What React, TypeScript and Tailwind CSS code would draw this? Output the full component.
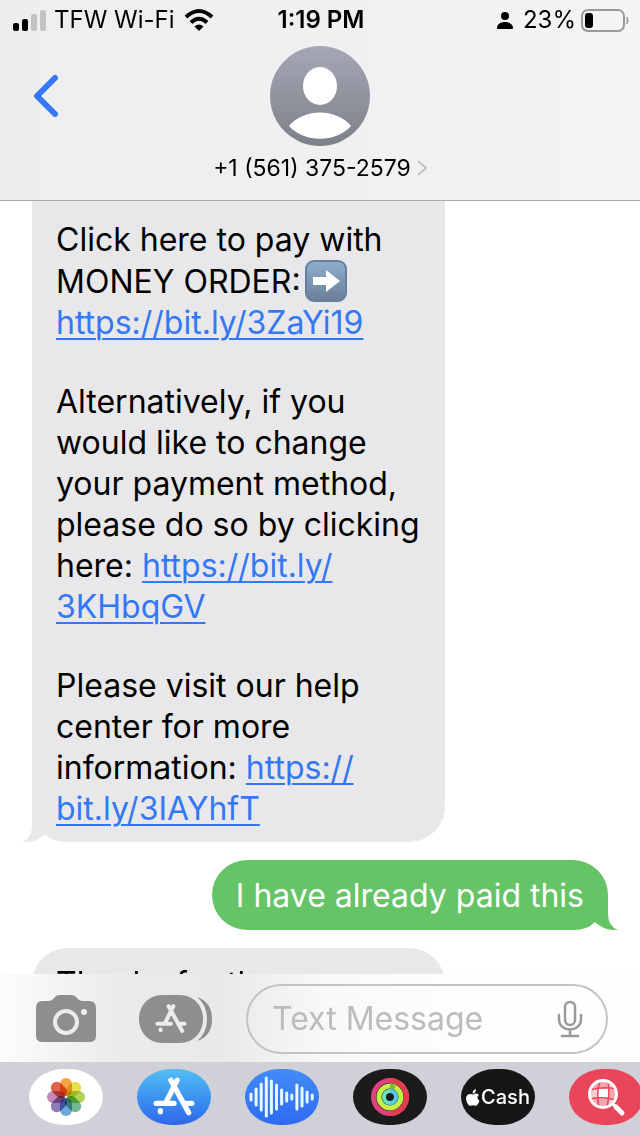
import type { ReactNode } from 'react';

const APP_PILL =
  'flex h-14 w-[74px] shrink-0 items-center justify-center overflow-hidden rounded-[34px/28px]';
const LINK = 'text-[#3478f6] underline decoration-2 underline-offset-4';

const PETALS = [
  '#f39a2d',
  '#e6dc3a',
  '#a6cf4a',
  '#63b08c',
  '#5f9ed6',
  '#7f6cb0',
  '#c07bb0',
  '#e0503c',
];

// half heights of the recording bars, left to right
const WAVE = [4, 9, 14, 20, 17, 13, 8, 5, 3, 13, 10, 6, 3];

function StatusBar() {
  return (
    <div className="flex h-10 items-center pl-3 pr-2.5 text-2xl leading-10 text-black">
      <div className="flex flex-1 items-center">
        <svg width="34" height="22" viewBox="0 0 34 22" aria-hidden="true">
          <rect x="1" y="14" width="6" height="8" rx="2" />
          <rect x="10" y="10" width="6" height="12" rx="2" />
          <rect x="19" y="5" width="6" height="17" rx="2" fill="#c2c2c4" />
          <rect x="28" y="1" width="6" height="21" rx="2" fill="#c2c2c4" />
        </svg>
        <span className="ml-2">TFW Wi-Fi</span>
        <svg className="ml-2" width="32" height="24" viewBox="0 0 32 24" fill="none" stroke="#000" strokeWidth="4" aria-hidden="true">
          <path d="M3 9 Q16 -3 29 9" />
          <path d="M8 14.5 Q16 7 24 14.5" />
          <path d="M11.5 18.5 Q16 14.5 20.5 18.5 L16 23 Z" fill="#000" stroke="none" />
        </svg>
      </div>
      <span className="font-semibold">1:19 PM</span>
      <div className="flex flex-1 items-center justify-end">
        <svg width="16" height="18" viewBox="0 0 16 18" aria-hidden="true">
          <circle cx="8" cy="5" r="4" />
          <path d="M0 17 C0 9 16 9 16 17 Q16 18 15 18 H1 Q0 18 0 17 Z" />
        </svg>
        <span className="ml-2.5">23%</span>
        <svg className="ml-1" width="50" height="24" viewBox="0 0 50 24" aria-hidden="true">
          <rect x="2" y="2" width="42" height="21" rx="6" fill="none" stroke="#9a9a9c" strokeWidth="2" />
          <rect x="5" y="5" width="8" height="15" rx="3" />
          <path d="M47 9 Q49 12.5 47 16 Z" fill="#9a9a9c" stroke="#9a9a9c" />
        </svg>
      </div>
    </div>
  );
}

function Header() {
  return (
    <header className="border-b border-[#a9a9ab] bg-linear-to-r from-[#eeeeef] via-[#f0f0f1] to-[#f4f4f6]">
      <StatusBar />
      <div className="grid h-40 grid-cols-[1fr_auto_1fr] pt-1.5">
        <button type="button" aria-label="Back" className="ml-[33px] mt-7 h-11 w-7">
          <svg width="26" height="44" viewBox="0 0 26 44" fill="none" stroke="#3478f6" strokeWidth="6" strokeLinecap="round" strokeLinejoin="round">
            <path d="M22 4 L4 22 L22 40" />
          </svg>
        </button>
        <div className="flex flex-col items-center">
          <svg width="100" height="100" viewBox="0 0 100 100" aria-hidden="true">
            <defs>
              <linearGradient id="avatar" x1="0" y1="0" x2="0" y2="1">
                <stop offset="0" stopColor="#a4a8b5" />
                <stop offset="1" stopColor="#7e8089" />
              </linearGradient>
            </defs>
            <circle cx="50" cy="50" r="50" fill="url(#avatar)" />
            <ellipse cx="50" cy="40" rx="17" ry="19" fill="#fff" />
            <path d="M19 80 C34 62 66 62 81 80 C66 97 34 97 19 80 Z" fill="#fff" />
          </svg>
          <button type="button" className="mt-2 flex items-center gap-1.5 text-[23px] leading-7 text-black">
            +1 (561) 375-2579
            <svg width="10" height="16" viewBox="0 0 10 16" fill="none" stroke="#c4c4c6" strokeWidth="2" aria-hidden="true">
              <path d="M1 1 L9 8 L1 15" />
            </svg>
          </button>
        </div>
      </div>
    </header>
  );
}

function ArrowEmoji() {
  return (
    <svg className="ml-1 inline-block align-[-9px]" width="42" height="42" viewBox="0 0 42 42" role="img" aria-label="right arrow">
      <defs>
        <linearGradient id="arrow" x1="0" y1="0" x2="0" y2="1">
          <stop offset="0" stopColor="#8fafcd" />
          <stop offset="1" stopColor="#6b7f98" />
        </linearGradient>
      </defs>
      <rect x="1" y="1" width="40" height="40" rx="8" fill="url(#arrow)" stroke="#64809e" strokeWidth="2" />
      <path d="M8 17 H21 V10 L35 21 L21 32 V25 H8 Z" fill="#fff" />
    </svg>
  );
}

function Messages() {
  return (
    <main className="flex min-h-0 flex-1 flex-col gap-[18px] overflow-hidden bg-white px-8 text-[32px] leading-[41px] text-black">
      <div className="relative flex w-[413px] shrink-0 flex-col gap-[38px] rounded-br-[36px] bg-[#e8e8ea] px-6 pb-[13px] pt-[18px]">
        <p>
          Click here to pay with
          <br />
          MONEY ORDER:
          <ArrowEmoji />
          <br />
          <a href="https://bit.ly/3ZaYi19" className={LINK}>https://bit.ly/3ZaYi19</a>
        </p>
        <p>
          Alternatively, if you
          <br />
          would like to change
          <br />
          your payment method,
          <br />
          please do so by clicking
          <br />
          here:{' '}
          <a href="https://bit.ly/3KHbqGV" className={LINK}>
            https://bit.ly/
            <br />
            3KHbqGV
          </a>
        </p>
        <p>
          Please visit our help
          <br />
          center for more
          <br />
          information:{' '}
          <a href="https://bit.ly/3IAYhfT" className={LINK}>
            https://
            <br />
            bit.ly/3IAYhfT
          </a>
        </p>
        <svg className="absolute -left-2.5 bottom-0" width="44" height="40" viewBox="0 0 44 40" aria-hidden="true">
          <path d="M11 18 H10 V24 Q10 36 0 40 H11 Z" fill="#e8e8ea" />
          <path d="M5 40 Q16 39 23 32 Q31 40 44 40 Z" fill="#fff" />
        </svg>
      </div>

      <div className="relative shrink-0 self-end rounded-[35px] rounded-br-none bg-[#64c466] px-6 pb-3.5 pt-4 leading-10 text-white">
        I have already paid this
        <svg className="absolute -right-2.5 bottom-0" width="44" height="40" viewBox="0 0 44 40" aria-hidden="true">
          <path d="M33 18 H34 V24 Q34 36 44 40 H33 Z" fill="#64c466" />
          <path d="M0 40 Q13 40 21 32 Q28 39 39 40 Z" fill="#fff" />
        </svg>
      </div>

      <div className="w-[413px] shrink-0 rounded-[36px] bg-[#e8e8ea] px-6 py-[15px]">Thanks for the</div>
    </main>
  );
}

function AppStoreMark({ size, color }: { size: number; color: string }) {
  return (
    <svg width={size} height={size} viewBox="0 0 40 40" fill="none" stroke={color} strokeWidth="5" strokeLinecap="round" aria-hidden="true">
      <path d="M23 4 L13 24 M17 4 L34 35 M3 26 H20 M30 26 H37 M7 33 L7 34" />
    </svg>
  );
}

function Composer() {
  return (
    <form className="flex h-[88px] shrink-0 items-center bg-[linear-gradient(to_right,#fcfcfc_0,#ebebeb_120px,#e9e9e9_220px,#f9f9f9_330px,#fefefe_480px)] pl-9 pr-8 pt-0.5">
      <button type="button" aria-label="Camera">
        <svg width="60" height="48" viewBox="0 0 60 48">
          <path d="M6 6 H13 Q16 6 18 3 Q20 0 23 0 H36 Q39 0 41 3 Q43 6 46 6 H53 Q60 6 60 13 V41 Q60 47 53 47 H7 Q0 47 0 41 V13 Q0 6 6 6 Z" fill="#8e8e8e" />
          <circle cx="30" cy="27" r="11" fill="none" stroke="#ececec" strokeWidth="4" />
          <circle cx="48" cy="17" r="3" fill="#ececec" />
        </svg>
      </button>
      <button type="button" aria-label="Apps" className="relative ml-[43px] h-12 w-[73px]">
        <svg width="73" height="48" viewBox="0 0 73 48">
          <path d="M24 0 H40 C72 0 72 48 40 48 H24 C-8 48 -8 0 24 0 Z" fill="#8e8e8e" />
          <path d="M58 2 Q68 10 68 24 Q68 38 58 46 Q73 41 73 24 Q73 7 58 2 Z" fill="#8e8e8e" />
        </svg>
        <span className="absolute left-4 top-2">
          <AppStoreMark size={32} color="#ececec" />
        </span>
      </button>
      <label className="ml-[34px] flex h-[70px] min-w-0 flex-1 items-center rounded-full border-2 border-[#c3c3c5] pl-6 pr-[23px]">
        <input
          type="text"
          aria-label="Message"
          placeholder="Text Message"
          className="min-w-0 flex-1 bg-transparent text-[32px] leading-10 outline-none placeholder:text-[#bcbcbe]"
        />
        <svg width="26" height="38" viewBox="0 0 26 38" fill="none" stroke="#99999b" strokeWidth="2.5" strokeLinecap="round" aria-hidden="true">
          <rect x="8" y="2" width="10" height="23" rx="5" />
          <path d="M2 15 V19 C2 33 24 33 24 19 V15 M13 30 V36 M5 36 H21" />
        </svg>
      </label>
    </form>
  );
}

function AppButton({ label, className, children }: { label: string; className: string; children: ReactNode }) {
  return (
    <button type="button" aria-label={label} className={`${APP_PILL} ${className}`}>
      {children}
    </button>
  );
}

function AppStrip() {
  return (
    <nav className="flex h-[74px] shrink-0 gap-[34px] overflow-hidden bg-[#d0d1d8] pl-[29px] pt-[7px]">
      <AppButton label="Photos" className="bg-white">
        <svg width="40" height="40" viewBox="-20 -20 40 40">
          {PETALS.map((fill, i) => (
            <rect
              key={fill}
              x="-6"
              y="-19"
              width="12"
              height="18"
              rx="6"
              fill={fill}
              className="mix-blend-multiply"
              opacity="0.9"
              transform={`rotate(${i * 45})`}
            />
          ))}
        </svg>
      </AppButton>
      <AppButton label="App Store" className="bg-linear-to-b from-[#54bdf3] to-[#2f66ea]">
        <AppStoreMark size={42} color="#fff" />
      </AppButton>
      <AppButton label="Audio" className="bg-linear-to-b from-[#448bf5] to-[#2f6bf2]">
        <svg width="66" height="42" viewBox="0 0 66 42" stroke="#e6fbff" strokeWidth="3" strokeLinecap="round">
          {WAVE.map((h, i) => (
            <path key={i} d={`M${2 + i * 5.1} ${21 - h + 1} V${21 + h - 1}`} />
          ))}
        </svg>
      </AppButton>
      <AppButton label="Fitness" className="bg-[#1b1b1c]">
        <svg width="40" height="40" viewBox="0 0 40 40" fill="none" strokeWidth="5">
          <circle cx="20" cy="20" r="16.5" stroke="#e0407f" />
          <path d="M20 3.5 A16.5 16.5 0 0 1 20 36.5" stroke="#e63d4e" />
          <circle cx="20" cy="20" r="11" stroke="#c3f244" />
          <path d="M20 9 A11 11 0 0 1 25 10" stroke="#86b83a" />
          <circle cx="20" cy="20" r="6" stroke="#6be3c0" strokeWidth="4" />
          <path d="M20 14 A6 6 0 0 1 20 26" stroke="#55c8ea" strokeWidth="4" />
        </svg>
      </AppButton>
      <AppButton label="Apple Cash" className="gap-px bg-[#161617] text-xl font-medium text-white">
        <svg width="14" height="17" viewBox="0 0 14 17" fill="#fff" aria-hidden="true">
          <path d="M10 0 Q10 4 6.5 4.5 Q6.5 1 10 0 Z M7 5.5 Q10 3.5 13 6 Q9.5 8.5 13.5 12 Q12 16 10 17 Q7 15.5 4 17 Q0 14 0 9 Q1 3.5 7 5.5 Z" />
        </svg>
        Cash
      </AppButton>
      <AppButton label="Images" className="bg-[#eb455b]">
        <svg width="40" height="40" viewBox="0 0 40 40" fill="none">
          <circle cx="17" cy="17" r="13" fill="#f4a6b0" />
          <path d="M5 12 L11 11 L11 20 L4 21 Z M22 6 L28 11 L22 12 Z M23 22 L29 22 L22 29 Z" fill="#f9ccd2" />
          <path d="M12 12 L22 12 L22 21 L12 22 Z" fill="#fff" />
          <path d="M4 13 Q17 9 30 12 M4 22 Q17 19 30 23 M14 4 Q10 17 13 30 M22 4 Q24 17 21 30" stroke="#eb455b" strokeWidth="1.5" />
          <circle cx="17" cy="17" r="13.5" stroke="#fff" strokeWidth="3" />
          <path d="M27 27 L29 29" stroke="#fff" strokeWidth="3" />
          <path d="M30 30 L36 36" stroke="#fff" strokeWidth="5" strokeLinecap="round" />
        </svg>
      </AppButton>
    </nav>
  );
}

export default function App() {
  return (
    <div className="flex h-screen flex-col overflow-hidden bg-white font-['Inter',sans-serif]">
      <Header />
      <Messages />
      <Composer />
      <AppStrip />
    </div>
  );
}
